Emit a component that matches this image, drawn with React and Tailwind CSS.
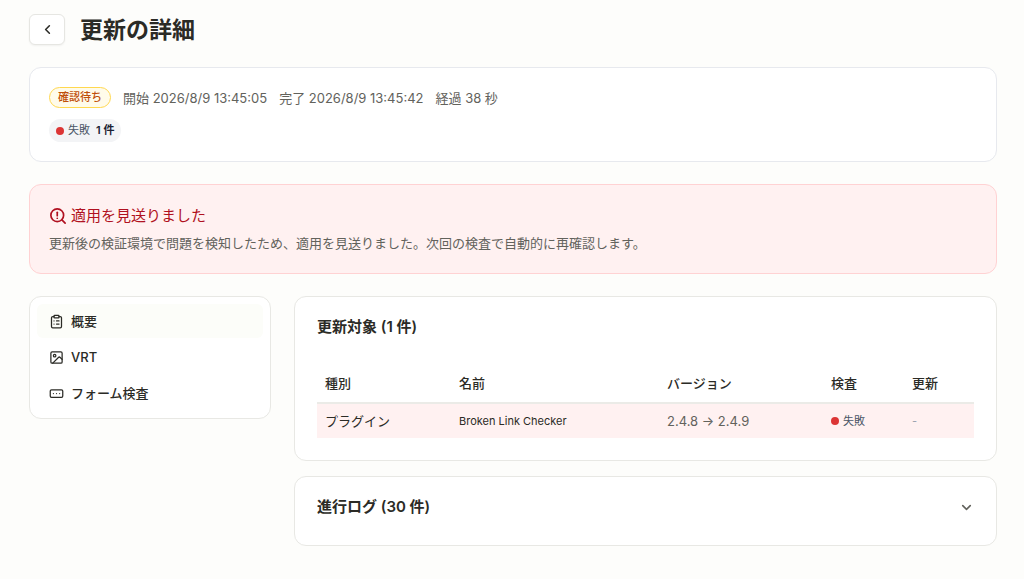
import {
  ChevronDown,
  ChevronLeft,
  ClipboardList,
  Image as ImageIcon,
  RectangleEllipsis,
} from 'lucide-react';

const NAV_ITEMS = [
  { label: '概要', Icon: ClipboardList, active: true },
  { label: 'VRT', Icon: ImageIcon, active: false },
  { label: 'フォーム検査', Icon: RectangleEllipsis, active: false },
];

function SearchAlertIcon() {
  return (
    <svg
      viewBox="0 0 24 24"
      className="size-[18px] shrink-0"
      fill="none"
      stroke="currentColor"
      strokeWidth="2.25"
      strokeLinecap="round"
      strokeLinejoin="round"
      aria-hidden="true"
    >
      <circle cx="11" cy="11" r="8.5" />
      <path d="m21.5 21.5-4.3-4.3" />
      <path d="M11 7v4.5" />
      <path d="M11 15h.01" />
    </svg>
  );
}

function Dot() {
  return <span className="size-2 shrink-0 rounded-full bg-[#dc3535]" />;
}

export default function App() {
  return (
    <div className="min-h-screen bg-[#fdfdfb] pt-3.5 pr-[27px] pb-8 pl-[29px] font-['Inter','Noto_Sans_CJK_JP',sans-serif] text-[13px] leading-5 text-[#2b2b26]">
      <header className="flex items-center gap-[15px]">
        <button
          type="button"
          aria-label="戻る"
          className="flex h-[31px] w-9 items-center justify-center rounded-md border border-[#e6e6e2] bg-white shadow-xs"
        >
          <ChevronLeft className="size-[15px]" strokeWidth={2.5} />
        </button>
        <h1 className="text-[23px] leading-[28px] font-bold">更新の詳細</h1>
      </header>

      <section className="mt-[22px] rounded-xl border border-[#e7e9ee] bg-white p-[19px]">
        <div className="flex flex-wrap items-center gap-3 text-[#62625c]">
          <span className="rounded-full border border-[#ffd84f] bg-[#fffbea] px-2 text-[11px] leading-[19px] font-medium text-[#bf4f0a]">
            確認待ち
          </span>
          <span>開始 2026/8/9 13:45:05</span>
          <span>完了 2026/8/9 13:45:42</span>
          <span>経過 38 秒</span>
        </div>
        <div className="mt-[11px] inline-flex items-center gap-1 rounded-full bg-[#f3f4f6] px-[7px] text-[11px] leading-[23px] text-[#4a5565]">
          <Dot />
          <span>失敗</span>
          <strong className="pl-0.5 font-semibold text-[#1b2233]">1 件</strong>
        </div>
      </section>

      <section className="mt-[22px] rounded-xl border border-[#ffd2d3] bg-[#fff1f1] p-[19px]">
        <h2 className="flex items-center gap-1 text-[15px] leading-6 font-normal text-[#b01020]">
          <SearchAlertIcon />
          適用を見送りました
        </h2>
        <p className="mt-1 leading-[22px] text-[#62625c]">
          更新後の検証環境で問題を検知したため、適用を見送りました。次回の検査で自動的に再確認します。
        </p>
      </section>

      <div className="mt-[22px] grid grid-cols-[242px_minmax(0,1fr)] items-start gap-[23px]">
        <nav className="flex flex-col gap-0.5 rounded-xl border border-[#e8e8e4] bg-white px-[7px] pt-[7px] pb-2">
          {NAV_ITEMS.map(({ label, Icon, active }) => (
            <a
              key={label}
              href="#"
              aria-current={active ? 'page' : undefined}
              className={`flex items-center gap-[7px] rounded-md px-3 py-[7px] font-medium ${active ? 'bg-[#fcfdf9]' : ''}`}
            >
              <Icon className="size-[15px]" />
              {label}
            </a>
          ))}
        </nav>

        <main className="flex flex-col gap-[15px]">
          <section className="rounded-xl border border-[#e8e8e4] bg-white px-[22px] pt-[18px] pb-[22px]">
            <h2 className="text-[15px] leading-6 font-semibold">更新対象 (1 件)</h2>
            <table className="mt-[25px] w-full text-left">
              <colgroup>
                <col className="w-[134px]" />
                <col />
                <col className="w-[164px]" />
                <col className="w-[81px]" />
                <col className="w-[70px]" />
              </colgroup>
              <thead>
                <tr className="h-[39px] border-b-2 border-[#ebebe7]">
                  <th className="px-2 font-medium">種別</th>
                  <th className="px-2 font-medium">名前</th>
                  <th className="px-2 font-medium">バージョン</th>
                  <th className="px-2 font-medium">検査</th>
                  <th className="px-2 font-medium">更新</th>
                </tr>
              </thead>
              <tbody>
                <tr className="h-[35px] bg-[#fff1f1]">
                  <td className="px-2">プラグイン</td>
                  <td className="px-2 text-[11px]">Broken Link Checker</td>
                  <td className="px-2 text-[#62625c]">2.4.8 → 2.4.9</td>
                  <td className="px-2">
                    <span className="flex items-center gap-1 text-[11px] text-[#4a5565]">
                      <Dot />
                      失敗
                    </span>
                  </td>
                  <td className="px-2 text-[11px] text-[#99a1af]">-</td>
                </tr>
              </tbody>
            </table>
          </section>

          <section className="rounded-xl border border-[#e8e8e4] bg-white px-[22px] pt-[18px] pb-[26px]">
            <h2>
              <button
                type="button"
                aria-expanded="false"
                className="flex w-full items-center justify-between text-left text-[15px] leading-6 font-semibold"
              >
                進行ログ (30 件)
                <ChevronDown className="size-[15px] text-[#62625c]" strokeWidth={2.5} />
              </button>
            </h2>
          </section>
        </main>
      </div>
    </div>
  );
}
